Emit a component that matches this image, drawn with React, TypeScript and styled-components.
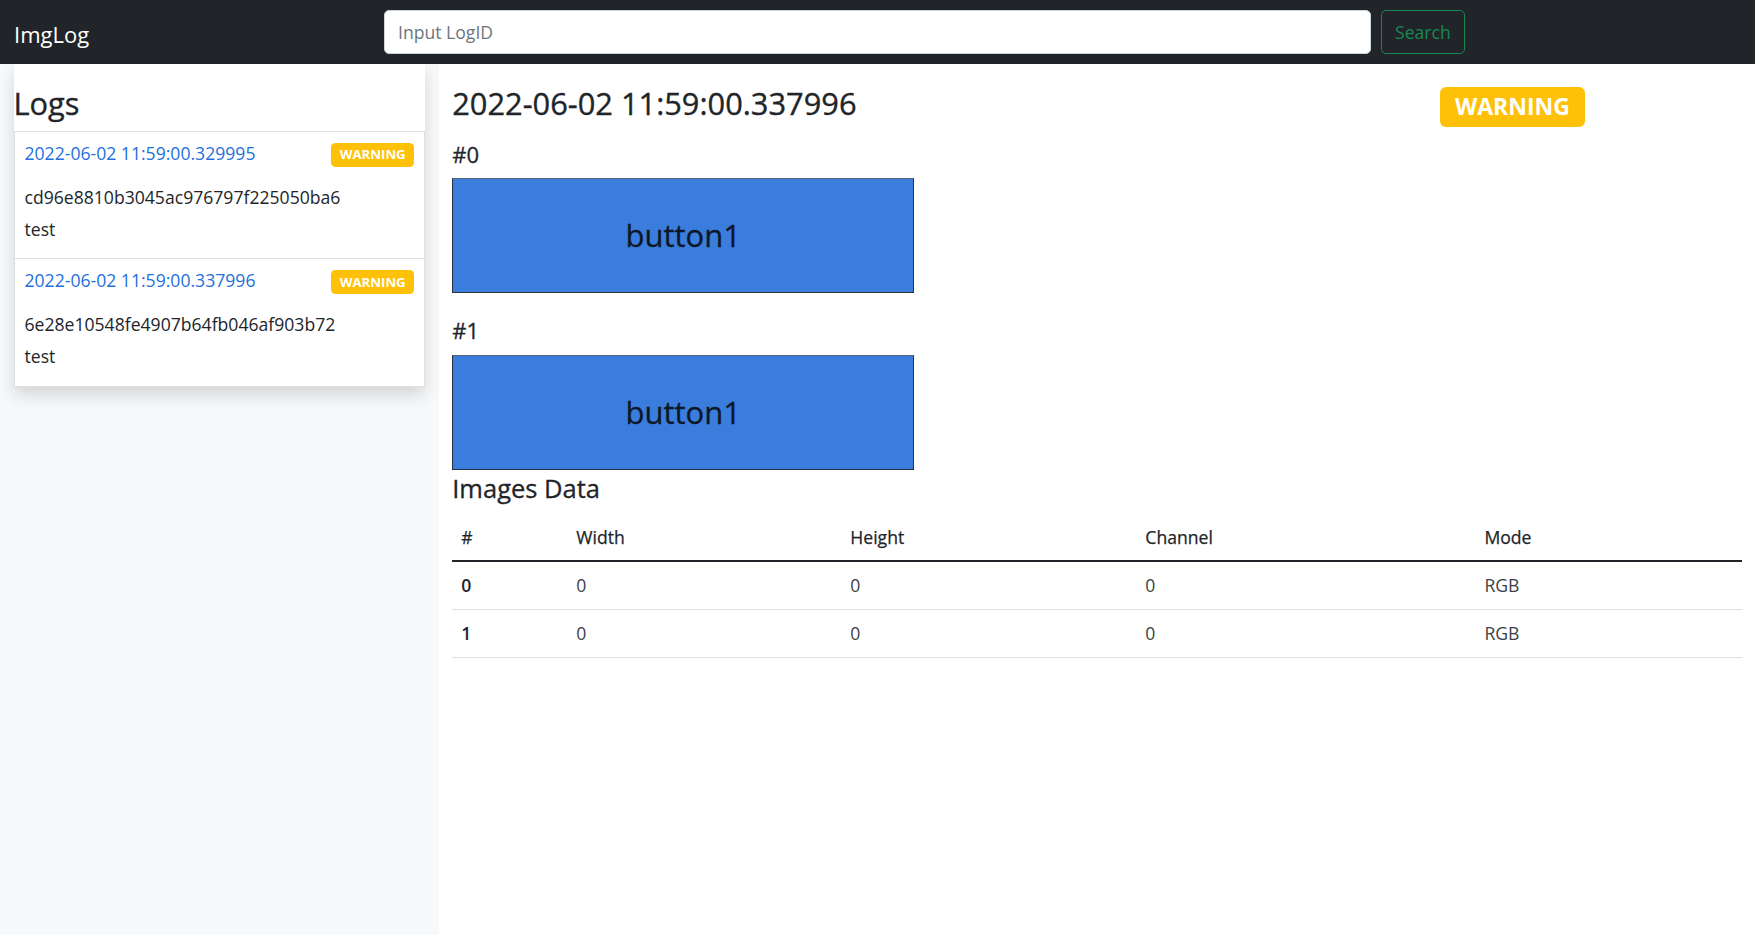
import React from "react";
import styled, { createGlobalStyle } from "styled-components";

const GlobalStyle = createGlobalStyle`
  html, body { margin: 0; padding: 0; }
  body {
    font-family: "Open Sans", "Noto Sans", sans-serif;
    font-size: 17.6px;
    line-height: 27px;
    color: #212529;
    background: #fff;
  }
  *, *::before, *::after { box-sizing: border-box; }
`;

const NavBar = styled.header`
  height: 64px;
  background: #212529;
  display: flex;
  align-items: center;
  padding: 0 14px;
`;

const Brand = styled.a`
  flex: none;
  width: 370px;
  padding-top: 4px;
  color: #fff;
  font-size: 22px;
  line-height: 27px;
  text-decoration: none;
`;

const SearchForm = styled.form`
  display: flex;
  gap: 10px;
  margin: 0;
`;

const SearchInput = styled.input`
  width: 987px;
  height: 44px;
  padding: 0 13px;
  border: 1px solid #ced4da;
  border-radius: 5px;
  background: #fff;
  font-family: inherit;
  font-size: 17.6px;
  color: #212529;
  outline: none;
  &::placeholder { color: #6c757d; }
`;

const SearchButton = styled.button`
  height: 44px;
  padding: 0 13px;
  background: transparent;
  border: 1px solid #198754;
  border-radius: 5px;
  color: #198754;
  font-family: inherit;
  font-size: 17.6px;
`;

const Body = styled.div`
  display: grid;
  grid-template-columns: 25% 75%;
  min-height: calc(100vh - 64px);
`;

const Sidebar = styled.aside`
  background: #f8f9fa;
  padding: 0 13.5px;
`;

const LogPanel = styled.section`
  background: #fff;
  box-shadow: 0 8px 16px rgba(0, 0, 0, 0.15);
  padding-top: 21px;
`;

const PanelTitle = styled.h3`
  margin: 0 0 8px;
  font-size: 30.8px;
  line-height: 37.8px;
  font-weight: 500;
  -webkit-text-stroke: 0.35px #212529;
`;

const LogItem = styled.div`
  border: 1px solid rgba(0, 0, 0, 0.125);
  padding: 8px 10px 15.5px;
  & + & { border-top: 0; }
`;

const ItemHead = styled.div`
  display: flex;
  justify-content: space-between;
  align-items: flex-start;
  margin-bottom: 17px;
`;

const DateLink = styled.a`
  color: #2470dc;
  text-decoration: none;
`;

const Badge = styled.span<{ $large?: boolean }>`
  display: inline-block;
  background: #ffc107;
  color: #fff;
  font-weight: 700;
  line-height: 1;
  white-space: nowrap;
  font-size: ${(p) => (p.$large ? "23px" : "13.2px")};
  padding: ${(p) => (p.$large ? "8.5px 15.5px" : "5.3px 8.6px")};
  border-radius: ${(p) => (p.$large ? "6px" : "4.5px")};
  margin-top: ${(p) => (p.$large ? "0" : "3px")};
`;

const ItemLine = styled.p<{ $gap?: number }>`
  margin: 0 0 ${(p) => p.$gap ?? 0}px;
`;

const Main = styled.main`
  padding: 21px 13.5px 0;
`;

const TitleRow = styled.div`
  display: grid;
  grid-template-columns: 1fr 302px;
  align-items: baseline;
  margin-bottom: 14px;
`;

const Title = styled.h3`
  margin: 0;
  font-size: 30.8px;
  line-height: 37.8px;
  font-weight: 500;
  -webkit-text-stroke: 0.35px #212529;
`;

const BadgeCell = styled.div`
  font-size: 30.8px;
  line-height: 37.8px;
`;

const ImageBlock = styled.div`
  & + & { margin-top: 24px; }
`;

const ImageLabel = styled.h5`
  margin: 0 0 10.5px;
  font-size: 22px;
  line-height: 27px;
  font-weight: 500;
  -webkit-text-stroke: 0.3px #212529;
`;

const ImageBox = styled.div`
  width: 462px;
  height: 115px;
  background: #3b7ddd;
  border: 1px solid #2b323d;
  border-top-color: #55657a;
  display: flex;
  align-items: center;
  justify-content: center;
  font-size: 31px;
  color: #0e1726;
  -webkit-text-stroke: 0.3px #0e1726;
`;

const SectionTitle = styled.h4`
  margin: 3px 0 11px;
  font-size: 25.5px;
  line-height: 30.6px;
  font-weight: 500;
  -webkit-text-stroke: 0.3px #212529;
`;

const Table = styled.table`
  width: 100%;
  border-collapse: collapse;
  table-layout: fixed;
`;

const Col = styled.col<{ $w: number }>`
  width: ${(p) => p.$w}px;
`;

const HeadCell = styled.th`
  text-align: left;
  padding: 9.5px 9px;
  font-weight: 400;
  -webkit-text-stroke: 0.25px #212529;
  border-bottom: 2px solid #212529;
`;

const RowHead = styled.th`
  text-align: left;
  padding: 10px 9px;
  font-weight: 600;
  border-bottom: 1px solid #dee2e6;
`;

const Cell = styled.td`
  padding: 10px 9px;
  color: #3d4246;
  border-bottom: 1px solid #dee2e6;
`;

const logs = [
  { time: "2022-06-02 11:59:00.329995", id: "cd96e8810b3045ac976797f225050ba6", msg: "test" },
  { time: "2022-06-02 11:59:00.337996", id: "6e28e10548fe4907b64fb046af903b72", msg: "test" },
];

const images = [
  { w: 0, h: 0, c: 0, mode: "RGB" },
  { w: 0, h: 0, c: 0, mode: "RGB" },
];

export default function App() {
  return (
    <>
      <GlobalStyle />
      <NavBar>
        <Brand href="#">ImgLog</Brand>
        <SearchForm onSubmit={(e) => e.preventDefault()}>
          <SearchInput placeholder="Input LogID" />
          <SearchButton type="submit">Search</SearchButton>
        </SearchForm>
      </NavBar>
      <Body>
        <Sidebar>
          <LogPanel>
            <PanelTitle>Logs</PanelTitle>
            {logs.map((l) => (
              <LogItem key={l.id}>
                <ItemHead>
                  <DateLink href="#">{l.time}</DateLink>
                  <Badge>WARNING</Badge>
                </ItemHead>
                <ItemLine $gap={5}>{l.id}</ItemLine>
                <ItemLine>{l.msg}</ItemLine>
              </LogItem>
            ))}
          </LogPanel>
        </Sidebar>
        <Main>
          <TitleRow>
            <Title>2022-06-02 11:59:00.337996</Title>
            <BadgeCell>
              <Badge $large>WARNING</Badge>
            </BadgeCell>
          </TitleRow>
          {images.map((_, i) => (
            <ImageBlock key={i}>
              <ImageLabel>#{i}</ImageLabel>
              <ImageBox>button1</ImageBox>
            </ImageBlock>
          ))}
          <SectionTitle>Images Data</SectionTitle>
          <Table>
            <colgroup>
              <Col $w={115} />
              <Col $w={274} />
              <Col $w={295} />
              <Col $w={339} />
              <Col $w={266} />
            </colgroup>
            <thead>
              <tr>
                <HeadCell>#</HeadCell>
                <HeadCell>Width</HeadCell>
                <HeadCell>Height</HeadCell>
                <HeadCell>Channel</HeadCell>
                <HeadCell>Mode</HeadCell>
              </tr>
            </thead>
            <tbody>
              {images.map((im, i) => (
                <tr key={i}>
                  <RowHead scope="row">{i}</RowHead>
                  <Cell>{im.w}</Cell>
                  <Cell>{im.h}</Cell>
                  <Cell>{im.c}</Cell>
                  <Cell>{im.mode}</Cell>
                </tr>
              ))}
            </tbody>
          </Table>
        </Main>
      </Body>
    </>
  );
}
